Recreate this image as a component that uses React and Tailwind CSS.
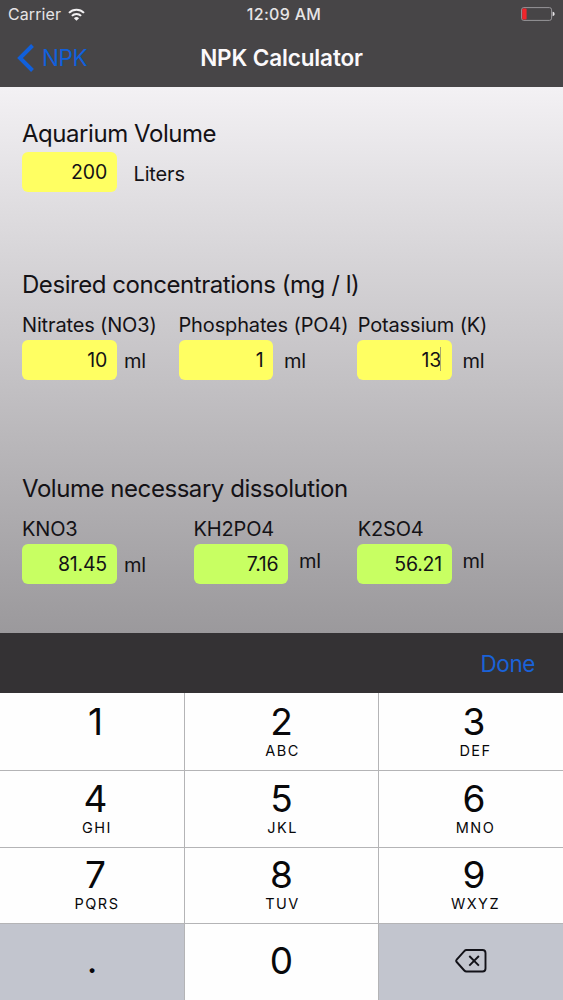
import React from "react";

function StatusBar() {
  return (
    <div className="grid h-7 grid-cols-[1fr_auto_1fr] items-center pl-2 pr-2 text-[#e6e4e6]">
      <div className="flex items-center gap-[7px]">
        <span className="text-[16px] leading-7 tracking-[0.1px]">Carrier</span>
        <svg className="h-[13px] w-[17px]" viewBox="0 0 17 13" fill="none" stroke="#f2f0f2" strokeWidth="2">
          <path d="M1 4.9a10.6 10.6 0 0 1 15 0" />
          <path d="M3.9 7.9a6.5 6.5 0 0 1 9.2 0" />
          <path d="M8.5 12.8L5.9 10.2a3.7 3.7 0 0 1 5.2 0Z" fill="#f2f0f2" stroke="none" />
        </svg>
      </div>
      <span className="pl-[5px] text-[16px] font-medium leading-7 tracking-[0.3px]">12:09 AM</span>
      <svg className="h-[14px] w-[34px] justify-self-end" viewBox="0 0 34 14">
        <rect x="0.6" y="0.6" width="30" height="12.8" rx="2.2" fill="none" stroke="#98969a" strokeWidth="1" />
        <rect x="1.2" y="1.4" width="4.4" height="11.2" rx="1" fill="#f0252b" />
        <path d="M31.6 4.8c1.6.3 2 1.2 2 2.2s-.4 1.9-2 2.2Z" fill="#e8e6e8" />
      </svg>
    </div>
  );
}

function NavBar() {
  return (
    <div className="grid h-[59px] grid-cols-[1fr_auto_1fr] items-center">
      <div className="flex items-center gap-[8px] pl-[17px] text-[#1160dc]">
        <svg className="h-7 w-[17px]" viewBox="0 0 17 28" fill="none" stroke="currentColor" strokeWidth="4">
          <path d="M15.5 1.5L3 14l12.5 12.5" />
        </svg>
        <span className="text-[22.5px] leading-7 tracking-[-0.4px]">NPK</span>
      </div>
      <h1 className="text-[22.5px] font-semibold leading-7 tracking-[-0.13px] text-[#fbf9fb]">NPK Calculator</h1>
      <span />
    </div>
  );
}

function Heading({ children }) {
  return <h2 className="h-[35px] whitespace-nowrap text-[24px] leading-[33px] tracking-[-0.45px]">{children}</h2>;
}

function Field({ value, color, active, label, unit, unitClass, labelClass = "" }) {
  return (
    <div>
      {label && (
        <div className={"h-[37px] w-0 whitespace-nowrap pt-[9px] text-[20px] leading-[26px] tracking-[-0.15px] " + labelClass}>
          {label}
        </div>
      )}
      <div className="flex">
        <div className={"flex h-10 w-[94.5px] justify-end rounded-[6px] pr-[9.5px] text-[19.5px] leading-[41px] tracking-[-0.2px] " + color}>
          {value}
          {active && <span className="-ml-px mr-px mt-[7px] h-[24px] w-px bg-[#a8a86c]" />}
        </div>
        <span className={"w-0 text-[20px] tracking-[-0.15px] " + unitClass}>{unit}</span>
      </div>
    </div>
  );
}

function Key({ digit, letters, inset = "pt-[8px]", lettersInset = "pl-[3px]" }) {
  return (
    <button className={"flex flex-col items-center bg-[#fefefe] " + inset}>
      <span className="text-[37px] leading-[42px]">{digit}</span>
      <span className={"text-[14.5px] leading-[16px] tracking-[1.5px] " + lettersInset}>{letters}</span>
    </button>
  );
}

const yellow = "bg-[#ffff62]";
const green = "bg-[#c8ff62]";

export default function App() {
  return (
    <div className="flex h-[1000px] w-[563px] flex-col overflow-hidden bg-[#474547] font-[Inter,sans-serif] text-[#141216]">
      <header className="h-[87px]">
        <StatusBar />
        <NavBar />
      </header>

      <main className="h-[546px] bg-linear-to-b from-[#f3f1f4] to-[#9b999c] pl-[22px] pt-[30px]">
        <section className="h-[151px]">
          <Heading>Aquarium Volume</Heading>
          <Field value="200" color={yellow} unit="Liters" unitClass="pl-[17px] leading-[44px]" />
        </section>
        <section className="h-[204px]">
          <Heading>Desired concentrations (mg / l)</Heading>
          <div className="grid grid-cols-[156.5px_178.5px_auto]">
            <Field label="Nitrates (NO3)" value="10" color={yellow} unit="ml" unitClass="pl-[7.5px] leading-[42px]" />
            <Field label="Phosphates (PO4)" value="1" color={yellow} unit="ml" unitClass="pl-[11px] leading-[42px]" />
            <Field label="Potassium (K)" labelClass="pl-[0.7px]" value="13" color={yellow} active unit="ml" unitClass="pl-[11px] leading-[42px]" />
          </div>
        </section>
        <section>
          <Heading>Volume necessary dissolution</Heading>
          <div className="grid grid-cols-[171.5px_163.5px_auto]">
            <Field label="KNO3" value="81.45" color={green} unit="ml" unitClass="pl-[7.5px] leading-[42px]" />
            <Field label="KH2PO4" value="7.16" color={green} unit="ml" unitClass="pl-[11px] leading-[35px]" />
            <Field label="K2SO4" labelClass="pl-[0.7px]" value="56.21" color={green} unit="ml" unitClass="pl-[11px] leading-[35px]" />
          </div>
        </section>
      </main>

      <div className="flex h-[60px] items-center justify-end bg-[#343234] pr-[28px] pt-px text-[22.5px] tracking-[-0.4px] text-[#1a62d8]">
        Done
      </div>

      <div className="grid flex-1 grid-cols-[184px_193px_184px] grid-rows-[77px_76px_75px_76px] gap-px bg-[#b4b4b6] text-[#08080a]">
        <Key digit="1" inset="pt-[8px] pl-[7px]" />
        <Key digit="2" letters="ABC" lettersInset="pl-[2px]" />
        <Key digit="3" letters="DEF" inset="pt-[8px] pl-[6px]" />
        <Key digit="4" letters="GHI" inset="pt-[7px] pl-[7px]" />
        <Key digit="5" letters="JKL" inset="pt-[7px]" lettersInset="pl-[2px]" />
        <Key digit="6" letters="MNO" inset="pt-[7px] pl-[6px]" />
        <Key digit="7" letters="PQRS" inset="pt-[6px] pl-[7px]" />
        <Key digit="8" letters="TUV" inset="pt-[6px]" lettersInset="pl-[2px]" />
        <Key digit="9" letters="WXYZ" inset="pt-[6px] pl-[6px]" />
        <button className="flex items-center justify-center bg-[#c2c5ce] pb-[5px]">
          <span className="text-[37px] leading-[42px]">.</span>
        </button>
        <button className="flex justify-center bg-[#fefefe] pt-[16px]">
          <span className="text-[37px] leading-[42px]">0</span>
        </button>
        <button className="flex justify-center bg-[#c2c5ce] pt-[25px]">
          <svg className="h-6 w-8" viewBox="0 0 32 24" fill="none" stroke="#121218" strokeWidth="1.9">
            <path d="M11.5 1h16a3 3 0 0 1 3 3v15.5a3 3 0 0 1-3 3h-16a3 3 0 0 1-2.2-1L1.7 13a1.7 1.7 0 0 1 0-2.3L9.3 2a3 3 0 0 1 2.2-1Z" />
            <path d="M14.3 7l9.6 9.6M23.9 7l-9.6 9.6" />
          </svg>
        </button>
      </div>
    </div>
  );
}
